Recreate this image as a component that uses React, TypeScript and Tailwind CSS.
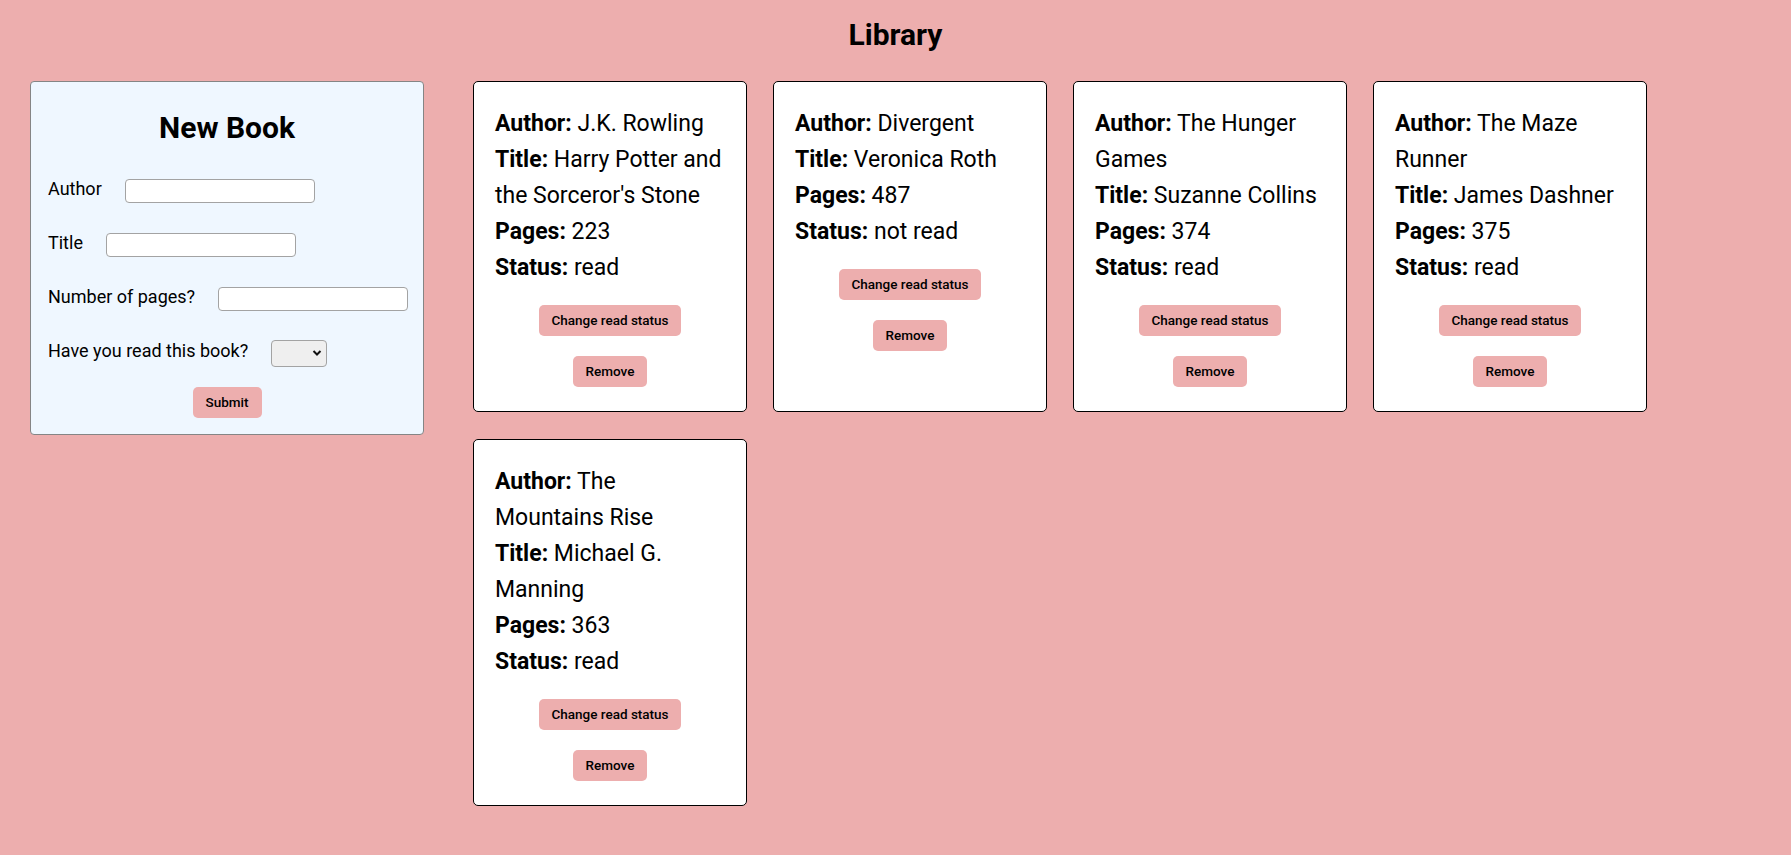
import React from 'react';

type Book = {
  author: string;
  title: string;
  pages: number;
  read: boolean;
};

const books: Book[] = [
  { author: 'J.K. Rowling', title: "Harry Potter and the Sorceror's Stone", pages: 223, read: true },
  { author: 'Divergent', title: 'Veronica Roth', pages: 487, read: false },
  { author: 'The Hunger Games', title: 'Suzanne Collins', pages: 374, read: true },
  { author: 'The Maze Runner', title: 'James Dashner', pages: 375, read: true },
  { author: 'The Mountains Rise', title: 'Michael G. Manning', pages: 363, read: true }
];

const btn =
  "bg-[#edaeae] rounded-[5px] h-[31px] text-[13.5px] font-medium text-black font-['Roboto',sans-serif]";

function Field({ label }: { label: string }) {
  return (
    <div className="flex items-center h-[30px]">
      <label className="-mt-[6px] text-[18px] text-black whitespace-nowrap">{label}</label>
      <input
        type="text"
        className="ml-[23px] shrink-0 w-[190px] h-[24px] bg-white border border-[#a3a3a3] rounded-[4px]"
      />
    </div>
  );
}

function NewBookForm() {
  return (
    <form className="w-[394px] shrink-0 bg-[#eff7ff] border border-[#858585] rounded-[4px] px-[17px] pt-[22px] pb-[16px] flex flex-col">
      <h2 className="text-[30px] leading-[48px] font-bold text-center text-black">New Book</h2>
      <div className="mt-[24px] flex flex-col gap-[24px]">
        <Field label="Author" />
        <Field label="Title" />
        <Field label="Number of pages?" />
        <div className="flex items-center h-[30px]">
          <label className="-mt-[6px] text-[18px] text-black whitespace-nowrap">Have you read this book?</label>
          <div className="relative ml-[23px] shrink-0">
            <select className="appearance-none w-[56px] h-[27px] bg-[#efefef] border border-[#a3a3a3] rounded-[4px] block">
              <option value=""></option>
              <option value="yes">Yes</option>
              <option value="no">No</option>
            </select>
            <svg
              className="absolute right-[5px] top-[9px] pointer-events-none"
              width="10"
              height="8"
              viewBox="0 0 10 8"
            >
              <path d="M1.5 2 L5 5.5 L8.5 2" fill="none" stroke="#111" strokeWidth="2" />
            </svg>
          </div>
        </div>
      </div>
      <button type="button" className={`${btn} self-center mt-[19px] w-[69px]`}>
        Submit
      </button>
    </form>
  );
}

function BookCard({ book }: { book: Book }) {
  return (
    <div className="w-[274px] bg-white border border-black rounded-[5px] px-[21px] pt-[24px] pb-[24px] flex flex-col">
      <div className="text-[23px] leading-[36px] text-black">
        <p>
          <b>Author:</b> {book.author}
        </p>
        <p>
          <b>Title:</b> {book.title}
        </p>
        <p>
          <b>Pages:</b> {book.pages}
        </p>
        <p>
          <b>Status:</b> {book.read ? 'read' : 'not read'}
        </p>
      </div>
      <button type="button" className={`${btn} self-center mt-[19px] px-[12px]`}>
        Change read status
      </button>
      <button type="button" className={`${btn} self-center mt-[20px] px-[13px]`}>
        Remove
      </button>
    </div>
  );
}

export default function App() {
  return (
    <div className="min-h-screen bg-[#edaeae] font-['Roboto',sans-serif] text-black pb-[40px]">
      <h1 className="pt-[11px] text-[30px] leading-[48px] font-bold text-center">Library</h1>
      <main className="mt-[22px] flex items-start pl-[30px] pr-[30px]">
        <NewBookForm />
        <div className="ml-[49px] flex flex-wrap gap-x-[26px] gap-y-[27px] max-w-[1280px]">
          {books.map((b) => (
            <BookCard key={b.author} book={b} />
          ))}
        </div>
      </main>
    </div>
  );
}
